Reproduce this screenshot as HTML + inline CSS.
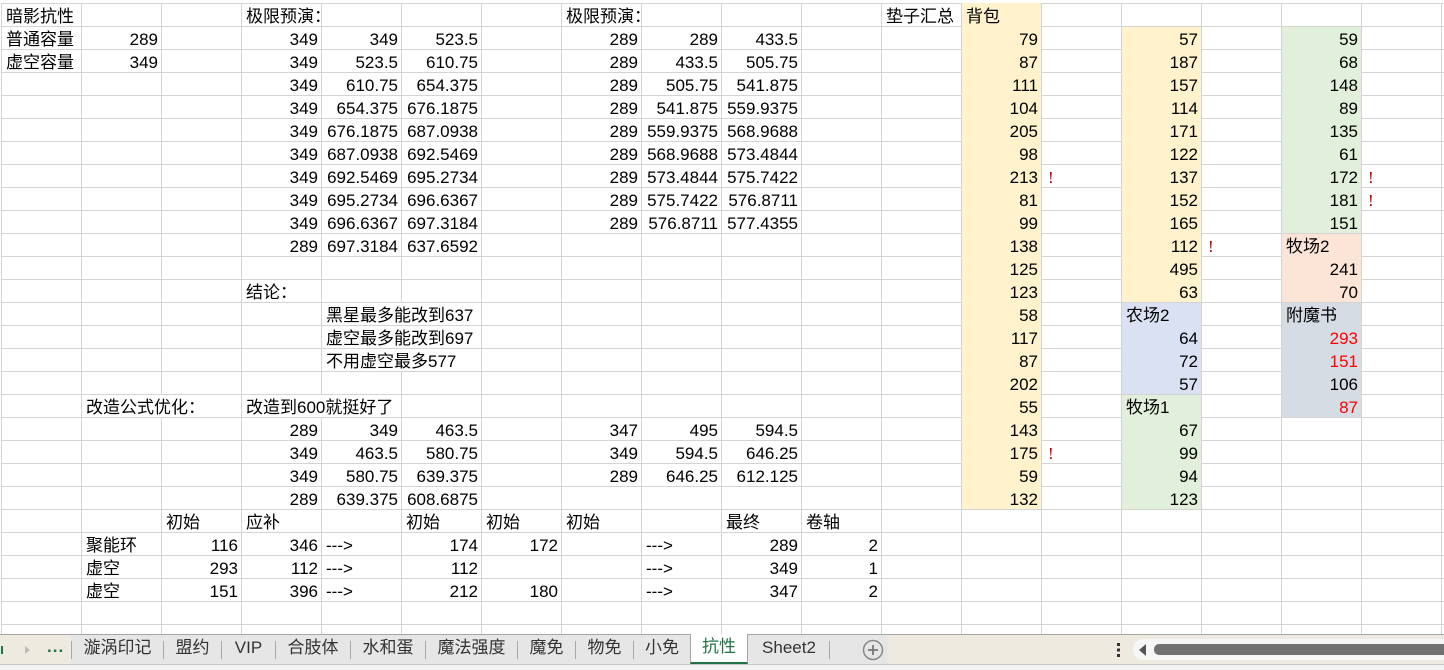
<!DOCTYPE html>
<html><head><meta charset="utf-8"><style>
*{margin:0;padding:0;box-sizing:border-box}
body{width:1444px;height:670px;overflow:hidden;background:#fff;font-family:"Liberation Sans","Noto Sans CJK SC",sans-serif;font-size:17px;color:#000;position:relative}
#g{position:absolute;left:1px;top:3px;width:1443px;height:632px;overflow:hidden;display:grid;grid-template-columns:repeat(18,80px);grid-auto-rows:23px;
background-image:linear-gradient(to right,#d4d4d4 1px,transparent 1px),linear-gradient(to bottom,#d4d4d4 1px,transparent 1px);background-size:80px 23px}
#g div{margin:1px 0 0 1px;line-height:22px;padding:2px 3px 0 4px;white-space:nowrap;overflow:visible}
#g .r{text-align:right}
#g .w{background:#fff}
#g .x{color:#b00000;padding-left:6px;font-family:"Liberation Serif",serif}
#g .red{color:#ff0000}
.y{background:#fff2cc}.gr{background:#e2efda}.pe{background:#fce4d6}.bl{background:#d9e1f2}.gy{background:#d6dce4}
#tb{position:absolute;left:0;top:634px;width:1444px;height:30px;background:#eeeae0;border-top:1px solid #a6a6a6}
#tabs{position:absolute;left:71px;top:0;width:817px;height:29px;background:#e6e6e6}
.t{position:absolute;top:0;height:28px;line-height:25px;font-size:17px;color:#333;text-align:center}
.s{position:absolute;top:6px;width:1px;height:18px;background:#a8a8a8}
#bot{position:absolute;left:0;top:664px;width:1444px;height:6px;background:#f3f3f3;border-top:1px solid #c8c8c8}
</style></head><body>
<div id="g">
<div class="y" style="grid-area:1/13/23/14;margin-top:0"></div>
<div class="y" style="grid-area:2/15/14/16"></div>
<div class="bl" style="grid-area:14/15/18/16"></div>
<div class="gr" style="grid-area:18/15/23/16"></div>
<div class="gr" style="grid-area:2/17/11/18"></div>
<div class="pe" style="grid-area:11/17/14/18"></div>
<div class="gy" style="grid-area:14/17/19/18"></div>

<div style="grid-area:1/1">暗影抗性</div>
<div style="grid-area:1/4">极限预演：</div>
<div style="grid-area:1/8">极限预演：</div>
<div style="grid-area:1/12">垫子汇总</div>
<div style="grid-area:1/13">背包</div>

<div style="grid-area:2/1">普通容量</div><div class="r" style="grid-area:2/2">289</div>
<div style="grid-area:3/1">虚空容量</div><div class="r" style="grid-area:3/2">349</div>

<div class="r" style="grid-area:2/4">349</div><div class="r" style="grid-area:2/5">349</div><div class="r" style="grid-area:2/6">523.5</div><div class="r" style="grid-area:2/8">289</div><div class="r" style="grid-area:2/9">289</div><div class="r" style="grid-area:2/10">433.5</div>
<div class="r" style="grid-area:3/4">349</div><div class="r" style="grid-area:3/5">523.5</div><div class="r" style="grid-area:3/6">610.75</div><div class="r" style="grid-area:3/8">289</div><div class="r" style="grid-area:3/9">433.5</div><div class="r" style="grid-area:3/10">505.75</div>
<div class="r" style="grid-area:4/4">349</div><div class="r" style="grid-area:4/5">610.75</div><div class="r" style="grid-area:4/6">654.375</div><div class="r" style="grid-area:4/8">289</div><div class="r" style="grid-area:4/9">505.75</div><div class="r" style="grid-area:4/10">541.875</div>
<div class="r" style="grid-area:5/4">349</div><div class="r" style="grid-area:5/5">654.375</div><div class="r" style="grid-area:5/6">676.1875</div><div class="r" style="grid-area:5/8">289</div><div class="r" style="grid-area:5/9">541.875</div><div class="r" style="grid-area:5/10">559.9375</div>
<div class="r" style="grid-area:6/4">349</div><div class="r" style="grid-area:6/5">676.1875</div><div class="r" style="grid-area:6/6">687.0938</div><div class="r" style="grid-area:6/8">289</div><div class="r" style="grid-area:6/9">559.9375</div><div class="r" style="grid-area:6/10">568.9688</div>
<div class="r" style="grid-area:7/4">349</div><div class="r" style="grid-area:7/5">687.0938</div><div class="r" style="grid-area:7/6">692.5469</div><div class="r" style="grid-area:7/8">289</div><div class="r" style="grid-area:7/9">568.9688</div><div class="r" style="grid-area:7/10">573.4844</div>
<div class="r" style="grid-area:8/4">349</div><div class="r" style="grid-area:8/5">692.5469</div><div class="r" style="grid-area:8/6">695.2734</div><div class="r" style="grid-area:8/8">289</div><div class="r" style="grid-area:8/9">573.4844</div><div class="r" style="grid-area:8/10">575.7422</div>
<div class="r" style="grid-area:9/4">349</div><div class="r" style="grid-area:9/5">695.2734</div><div class="r" style="grid-area:9/6">696.6367</div><div class="r" style="grid-area:9/8">289</div><div class="r" style="grid-area:9/9">575.7422</div><div class="r" style="grid-area:9/10">576.8711</div>
<div class="r" style="grid-area:10/4">349</div><div class="r" style="grid-area:10/5">696.6367</div><div class="r" style="grid-area:10/6">697.3184</div><div class="r" style="grid-area:10/8">289</div><div class="r" style="grid-area:10/9">576.8711</div><div class="r" style="grid-area:10/10">577.4355</div>
<div class="r" style="grid-area:11/4">289</div><div class="r" style="grid-area:11/5">697.3184</div><div class="r" style="grid-area:11/6">637.6592</div>

<div style="grid-area:13/4">结论：</div>
<div class="w" style="grid-area:14/5/15/7">黑星最多能改到637</div>
<div class="w" style="grid-area:15/5/16/7">虚空最多能改到697</div>
<div class="w" style="grid-area:16/5/17/7">不用虚空最多577</div>
<div class="w" style="grid-area:18/2/19/4">改造公式优化：</div>
<div class="w" style="grid-area:18/4/19/6">改造到600就挺好了</div>

<div class="r" style="grid-area:19/4">289</div><div class="r" style="grid-area:19/5">349</div><div class="r" style="grid-area:19/6">463.5</div><div class="r" style="grid-area:19/8">347</div><div class="r" style="grid-area:19/9">495</div><div class="r" style="grid-area:19/10">594.5</div>
<div class="r" style="grid-area:20/4">349</div><div class="r" style="grid-area:20/5">463.5</div><div class="r" style="grid-area:20/6">580.75</div><div class="r" style="grid-area:20/8">349</div><div class="r" style="grid-area:20/9">594.5</div><div class="r" style="grid-area:20/10">646.25</div>
<div class="r" style="grid-area:21/4">349</div><div class="r" style="grid-area:21/5">580.75</div><div class="r" style="grid-area:21/6">639.375</div><div class="r" style="grid-area:21/8">289</div><div class="r" style="grid-area:21/9">646.25</div><div class="r" style="grid-area:21/10">612.125</div>
<div class="r" style="grid-area:22/4">289</div><div class="r" style="grid-area:22/5">639.375</div><div class="r" style="grid-area:22/6">608.6875</div>

<div style="grid-area:23/3">初始</div><div style="grid-area:23/4">应补</div><div style="grid-area:23/6">初始</div><div style="grid-area:23/7">初始</div><div style="grid-area:23/8">初始</div><div style="grid-area:23/10">最终</div><div style="grid-area:23/11">卷轴</div>
<div style="grid-area:24/2">聚能环</div><div class="r" style="grid-area:24/3">116</div><div class="r" style="grid-area:24/4">346</div><div style="grid-area:24/5">---&gt;</div><div class="r" style="grid-area:24/6">174</div><div class="r" style="grid-area:24/7">172</div><div style="grid-area:24/9">---&gt;</div><div class="r" style="grid-area:24/10">289</div><div class="r" style="grid-area:24/11">2</div>
<div style="grid-area:25/2">虚空</div><div class="r" style="grid-area:25/3">293</div><div class="r" style="grid-area:25/4">112</div><div style="grid-area:25/5">---&gt;</div><div class="r" style="grid-area:25/6">112</div><div style="grid-area:25/9">---&gt;</div><div class="r" style="grid-area:25/10">349</div><div class="r" style="grid-area:25/11">1</div>
<div style="grid-area:26/2">虚空</div><div class="r" style="grid-area:26/3">151</div><div class="r" style="grid-area:26/4">396</div><div style="grid-area:26/5">---&gt;</div><div class="r" style="grid-area:26/6">212</div><div class="r" style="grid-area:26/7">180</div><div style="grid-area:26/9">---&gt;</div><div class="r" style="grid-area:26/10">347</div><div class="r" style="grid-area:26/11">2</div>

<div class="r" style="grid-area:2/13">79</div><div class="r" style="grid-area:3/13">87</div><div class="r" style="grid-area:4/13">111</div><div class="r" style="grid-area:5/13">104</div><div class="r" style="grid-area:6/13">205</div><div class="r" style="grid-area:7/13">98</div><div class="r" style="grid-area:8/13">213</div><div class="r" style="grid-area:9/13">81</div><div class="r" style="grid-area:10/13">99</div><div class="r" style="grid-area:11/13">138</div><div class="r" style="grid-area:12/13">125</div><div class="r" style="grid-area:13/13">123</div><div class="r" style="grid-area:14/13">58</div><div class="r" style="grid-area:15/13">117</div><div class="r" style="grid-area:16/13">87</div><div class="r" style="grid-area:17/13">202</div><div class="r" style="grid-area:18/13">55</div><div class="r" style="grid-area:19/13">143</div><div class="r" style="grid-area:20/13">175</div><div class="r" style="grid-area:21/13">59</div><div class="r" style="grid-area:22/13">132</div>
<div class="x" style="grid-area:8/14">!</div><div class="x" style="grid-area:20/14">!</div>

<div class="r" style="grid-area:2/15">57</div><div class="r" style="grid-area:3/15">187</div><div class="r" style="grid-area:4/15">157</div><div class="r" style="grid-area:5/15">114</div><div class="r" style="grid-area:6/15">171</div><div class="r" style="grid-area:7/15">122</div><div class="r" style="grid-area:8/15">137</div><div class="r" style="grid-area:9/15">152</div><div class="r" style="grid-area:10/15">165</div><div class="r" style="grid-area:11/15">112</div><div class="r" style="grid-area:12/15">495</div><div class="r" style="grid-area:13/15">63</div><div style="grid-area:14/15">农场2</div><div class="r" style="grid-area:15/15">64</div><div class="r" style="grid-area:16/15">72</div><div class="r" style="grid-area:17/15">57</div><div style="grid-area:18/15">牧场1</div><div class="r" style="grid-area:19/15">67</div><div class="r" style="grid-area:20/15">99</div><div class="r" style="grid-area:21/15">94</div><div class="r" style="grid-area:22/15">123</div>
<div class="x" style="grid-area:11/16">!</div>

<div class="r" style="grid-area:2/17">59</div><div class="r" style="grid-area:3/17">68</div><div class="r" style="grid-area:4/17">148</div><div class="r" style="grid-area:5/17">89</div><div class="r" style="grid-area:6/17">135</div><div class="r" style="grid-area:7/17">61</div><div class="r" style="grid-area:8/17">172</div><div class="r" style="grid-area:9/17">181</div><div class="r" style="grid-area:10/17">151</div><div style="grid-area:11/17">牧场2</div><div class="r" style="grid-area:12/17">241</div><div class="r" style="grid-area:13/17">70</div><div style="grid-area:14/17">附魔书</div><div class="r red" style="grid-area:15/17">293</div><div class="r red" style="grid-area:16/17">151</div><div class="r" style="grid-area:17/17">106</div><div class="r red" style="grid-area:18/17">87</div>
<div class="x" style="grid-area:8/18">!</div><div class="x" style="grid-area:9/18">!</div>
</div>

<div id="tb">
<svg style="position:absolute;left:0;top:8px" width="40" height="14"><path d="M2 3v8" stroke="#217346" stroke-width="2"/><path d="M25 3l5 4-5 4z" fill="#bdbdbd"/></svg>
<div style="position:absolute;left:47px;top:2px;color:#217346;font-size:17px;font-weight:bold;letter-spacing:1px">...</div>
<div id="tabs">
<div class="s" style="left:0"></div>
<div class="t" style="left:1px;width:91px">漩涡印记</div><div class="s" style="left:92px"></div>
<div class="t" style="left:93px;width:57px">盟约</div><div class="s" style="left:150px"></div>
<div class="t" style="left:151px;width:53px">VIP</div><div class="s" style="left:204px"></div>
<div class="t" style="left:205px;width:74px">合肢体</div><div class="s" style="left:279px"></div>
<div class="t" style="left:280px;width:74px">水和蛋</div><div class="s" style="left:354px"></div>
<div class="t" style="left:355px;width:91px">魔法强度</div><div class="s" style="left:446px"></div>
<div class="t" style="left:447px;width:57px">魔免</div><div class="s" style="left:504px"></div>
<div class="t" style="left:505px;width:57px">物免</div><div class="s" style="left:562px"></div>
<div class="t" style="left:563px;width:56px">小免</div>
<div class="t" style="left:619px;width:58px;top:-1px;height:30px;background:#fff;color:#217346;border-left:1px solid #a6a6a6;border-right:1px solid #a6a6a6;border-bottom:2px solid #217346">抗性</div>
<div class="t" style="left:678px;width:80px">Sheet2</div><div class="s" style="left:758px"></div>
<svg style="position:absolute;left:791px;top:4px" width="22" height="22"><circle cx="11" cy="11" r="9.5" fill="none" stroke="#888" stroke-width="1.5"/><path d="M11 6v10M6 11h10" stroke="#777" stroke-width="1.8"/></svg>
</div>
<div style="position:absolute;left:1117px;top:8px;width:3px;height:14px;background:repeating-linear-gradient(#333 0 3px,transparent 3px 5.5px)"></div>
<div style="position:absolute;left:1133px;top:4px;width:320px;height:21px;border-radius:10px;background:#f6f6f6"></div>
<svg style="position:absolute;left:1138px;top:8px" width="10" height="14"><path d="M8 1L1 7l7 6z" fill="#555"/></svg>
<div style="position:absolute;left:1154px;top:9px;width:300px;height:11px;border-radius:5px;background:#717171"></div>
</div>
<div id="bot"></div>
</body></html>
